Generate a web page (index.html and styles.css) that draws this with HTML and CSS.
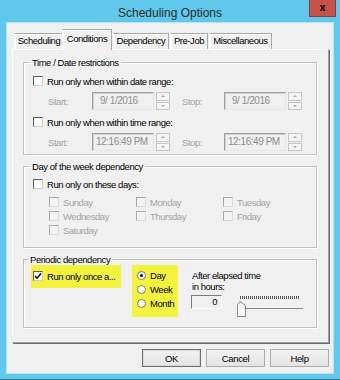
FILE: index.html
```html
<!DOCTYPE html>
<html lang="en">
<head>
    <meta charset="UTF-8">
    <meta name="viewport" content="width=device-width, initial-scale=1.0">
    <title>Scheduling Options</title>
    <link rel="stylesheet" href="styles.css">
</head>
<body>
    <div class="window">
        <div class="titlebar">
            <span class="title">Scheduling Options</span>
            <span class="close">x</span>
        </div>
        <div class="client">
            <div class="tabs">
                <div class="tab tab-scheduling">Scheduling</div>
                <div class="tab tab-conditions active">Conditions</div>
                <div class="tab tab-dependency">Dependency</div>
                <div class="tab tab-prejob">Pre-Job</div>
                <div class="tab tab-misc">Miscellaneous</div>
            </div>
            <div class="panel">
                <fieldset class="group group-time">
                    <legend>Time / Date restrictions</legend>
                    <label class="check"><span class="box"></span>Run only when within date range:</label>
                    <div class="range">
                        <span class="range-label">Start:</span>
                        <div class="field date">9/ 1/2016</div>
                        <div class="spin"><i></i><i></i></div>
                        <span class="range-label stop">Stop:</span>
                        <div class="field date">9/ 1/2016</div>
                        <div class="spin"><i></i><i></i></div>
                    </div>
                    <label class="check check-second"><span class="box"></span>Run only when within time range:</label>
                    <div class="range">
                        <span class="range-label">Start:</span>
                        <div class="field time">12:16:49 PM</div>
                        <div class="spin"><i></i><i></i></div>
                        <span class="range-label stop">Stop:</span>
                        <div class="field time">12:16:49 PM</div>
                        <div class="spin"><i></i><i></i></div>
                    </div>
                </fieldset>

                <fieldset class="group group-days">
                    <legend>Day of the week dependency</legend>
                    <label class="check"><span class="box"></span>Run only on these days:</label>
                    <div class="days">
                        <label class="check disabled"><span class="box"></span>Sunday</label>
                        <label class="check disabled"><span class="box"></span>Monday</label>
                        <label class="check disabled"><span class="box"></span>Tuesday</label>
                        <label class="check disabled"><span class="box"></span>Wednesday</label>
                        <label class="check disabled"><span class="box"></span>Thursday</label>
                        <label class="check disabled"><span class="box"></span>Friday</label>
                        <label class="check disabled"><span class="box"></span>Saturday</label>
                    </div>
                </fieldset>

                <fieldset class="group group-periodic">
                    <legend>Periodic dependency</legend>
                    <div class="periodic">
                        <div class="mark mark-check">
                            <label class="check">
                                <span class="box">
                                    <svg width="8" height="8" viewBox="0 0 8 8"><path d="M1 4 L3 6.2 L7 1.5" fill="none" stroke="#000" stroke-width="1.5"/></svg>
                                </span>Run only once a...
                            </label>
                        </div>
                        <div class="mark mark-radios">
                            <label class="radio"><span class="dot on"></span>Day</label>
                            <label class="radio"><span class="dot"></span>Week</label>
                            <label class="radio"><span class="dot"></span>Month</label>
                        </div>
                        <div class="elapsed">
                            <div class="elapsed-label">After elapsed time<br>in hours:</div>
                            <div class="elapsed-row">
                                <div class="hours">0</div>
                                <div class="slider">
                                    <div class="ticks"></div>
                                    <div class="track"></div>
                                    <svg class="thumb" width="9" height="16" viewBox="0 0 9 16">
                                        <path d="M0.5 15.5 V4 L3 0.5 L8.5 4.5 V15.5 Z" fill="#f7f7f7" stroke="#8a8a8a"/>
                                    </svg>
                                </div>
                            </div>
                        </div>
                    </div>
                </fieldset>
            </div>
            <div class="buttons">
                <button class="btn default">OK</button>
                <button class="btn">Cancel</button>
                <button class="btn">Help</button>
            </div>
        </div>
    </div>
</body>
</html>
```

FILE: styles.css
```css
body {
    margin: 0;
    padding: 0;
    font-family: "Liberation Sans", Arial, sans-serif;
    font-size: 9.5px;
    letter-spacing: -0.45px;
    color: #000;
}

.window {
    width: 340px;
    height: 380px;
    box-sizing: border-box;
    background-color: #60c8ec;
    box-shadow: inset 0 -1px 0 #3b6f82;
}

/* Title bar */
.titlebar {
    position: relative;
    height: 22px;
    display: flex;
    align-items: center;
    justify-content: center;
}

.title {
    font-size: 12px;
    letter-spacing: 0;
    color: #2b2b2b;
    margin-top: 4px;
}

.close {
    position: absolute;
    top: 0;
    right: 4px;
    width: 27px;
    height: 17px;
    box-sizing: border-box;
    background-color: #c7504a;
    border: 1px solid #8e3a36;
    border-top: none;
    font-weight: bold;
    font-size: 11px;
    letter-spacing: 0;
    line-height: 14px;
    text-align: center;
}

/* Client area */
.client {
    margin: 0 6px;
    height: 352px;
    box-sizing: border-box;
    border: 1px solid #b8e6f6;
    background-color: #f0f0f0;
    padding: 6px 4px 0 5px;
}

.tabs {
    display: flex;
    align-items: flex-end;
    height: 20px;
    padding-left: 2px;
}

.tab {
    height: 16px;
    box-sizing: border-box;
    line-height: 14px;
    text-align: center;
    white-space: nowrap;
    border: 1px solid #a9a9a9;
    border-bottom: none;
    border-left-color: #fff;
    box-shadow: inset 1px 1px 0 #fff;
    background-color: #f0f0f0;
}

.tab + .tab {
    margin-left: 1px;
}

.tab-scheduling { width: 50px; }
.tab-conditions { width: 50px; }
.tab-dependency { width: 56px; }
.tab-prejob { width: 38px; }
.tab-misc { width: 63px; }

.tab.active {
    position: relative;
    z-index: 1;
    height: 21px;
    margin: 0 -2px -1px -2px;
    line-height: 17px;
}

.tab.active + .tab {
    margin-left: 3px;
}

.panel {
    height: 294px;
    box-sizing: border-box;
    border: 1px solid;
    border-color: #fff #a0a0a0 #a0a0a0 #fff;
    box-shadow: 1px 1px 0 #6a6a6a;
    padding: 7px 11px 0 10px;
}

/* Group boxes */
.group {
    margin: 0;
    padding: 0 0 0 9px;
    border: 1px solid #c0c0c0;
    box-shadow: 1px 1px 0 #fff, inset 1px 1px 0 #fff;
}

.group + .group {
    margin-top: 6px;
}

.group legend {
    padding: 0 2px;
    margin-left: -3px;
    line-height: 11px;
}

.group-time {
    padding-bottom: 3px;
}

.group-days {
    padding-bottom: 10px;
}

.group-periodic {
    padding: 0 0 10px 7px;
}

/* Check boxes and radios */
.check,
.radio {
    display: flex;
    align-items: center;
    height: 14px;
}

.group > .check {
    margin-top: 6px;
}

.group-days > .check {
    margin-top: 5px;
}

.group > .check-second {
    margin-top: 5px;
}

.box {
    width: 10px;
    height: 10px;
    box-sizing: border-box;
    margin-right: 4px;
    border: 1px solid;
    border-color: #5e5e5e #cfcfcf #cfcfcf #5e5e5e;
    background-color: #fff;
    display: flex;
    align-items: center;
    justify-content: center;
}

.check.disabled {
    color: #a3a3a3;
}

.check.disabled .box {
    border-color: #a8a8a8 #dcdcdc #dcdcdc #a8a8a8;
    background-color: #f3f3f3;
}

.dot {
    width: 9px;
    height: 9px;
    box-sizing: border-box;
    margin-right: 4px;
    border-radius: 50%;
    border: 1px solid #7a7a7a;
    background-color: #fff;
    display: flex;
    align-items: center;
    justify-content: center;
}

.dot.on::after {
    content: "";
    width: 3px;
    height: 3px;
    border-radius: 50%;
    background-color: #000;
}

/* Date / time ranges */
.range {
    display: flex;
    align-items: center;
    height: 18px;
    margin: 4px 0 0 15px;
    color: #a3a3a3;
}

.range-label {
    width: 44px;
}

.range-label.stop {
    width: 42px;
    margin-left: 12px;
}

.field {
    width: 62px;
    height: 18px;
    box-sizing: border-box;
    border: 1px solid;
    border-color: #a0a0a0 #e6e6e6 #e6e6e6 #a0a0a0;
    box-shadow: inset 1px 1px 0 #d0d0d0;
    line-height: 16px;
    color: #8d8d8d;
    font-size: 10px;
    white-space: pre;
}

.field.date {
    padding-left: 7px;
}

.field.time {
    padding-left: 3px;
}

.spin {
    display: flex;
    flex-direction: column;
    gap: 1px;
    width: 14px;
    height: 18px;
    margin-left: 2px;
}

.spin i {
    flex: 1;
    display: flex;
    align-items: center;
    justify-content: center;
    border: 1px solid #c6c6c6;
    background-color: #f4f4f4;
}

.spin i::after {
    content: "";
    border-left: 2px solid transparent;
    border-right: 2px solid transparent;
    border-bottom: 2px solid #a8a8a8;
}

.spin i + i::after {
    border-bottom: none;
    border-top: 2px solid #a8a8a8;
}

/* Days of the week */
.days {
    display: grid;
    grid-template-columns: repeat(3, 87px);
    grid-auto-rows: 14px;
    margin: 4px 0 0 16px;
}

/* Periodic dependency */
.periodic {
    display: flex;
    align-items: flex-start;
}

.mark {
    background-color: #f3f33d;
    box-sizing: border-box;
}

.mark-check {
    width: 90px;
    height: 23px;
    padding: 4px 0 0 2px;
}

.mark-radios {
    width: 46px;
    height: 52px;
    margin-left: 11px;
    padding: 3px 0 0 5px;
}

.elapsed {
    margin: 5px 0 0 13px;
}

.elapsed-label {
    line-height: 11px;
    padding-left: 1px;
}

.elapsed-row {
    display: flex;
    margin-top: 3px;
}

.hours {
    width: 31px;
    height: 14px;
    box-sizing: border-box;
    border: 1px solid;
    border-color: #7a7a7a #fff #fff #7a7a7a;
    text-align: right;
    padding-right: 4px;
    line-height: 12px;
}

.slider {
    position: relative;
    width: 67px;
    height: 22px;
    margin-left: 15px;
}

.ticks {
    width: 60px;
    height: 3px;
    margin: 1px 0 0 3px;
    background: repeating-linear-gradient(90deg, #5a5a5a 0 1px, transparent 1px 2px);
}

.track {
    width: 58px;
    height: 1px;
    margin: 9px 0 0 8px;
    background-color: #8a8a8a;
}

.thumb {
    position: absolute;
    left: 0;
    top: 6px;
}

/* Dialog buttons */
.buttons {
    display: flex;
    justify-content: flex-end;
    gap: 5px;
    margin-top: 6px;
}

.btn {
    width: 59px;
    height: 18px;
    padding: 0;
    font-family: inherit;
    font-size: 9.5px;
    letter-spacing: -0.35px;
    color: #000;
    border: 1px solid #acacac;
    background: linear-gradient(#f2f2f2, #e4e4e4);
}

.btn.default {
    border-color: #6f6f6f;
    box-shadow: inset 0 0 0 1px #d8d8d8;
}
```
